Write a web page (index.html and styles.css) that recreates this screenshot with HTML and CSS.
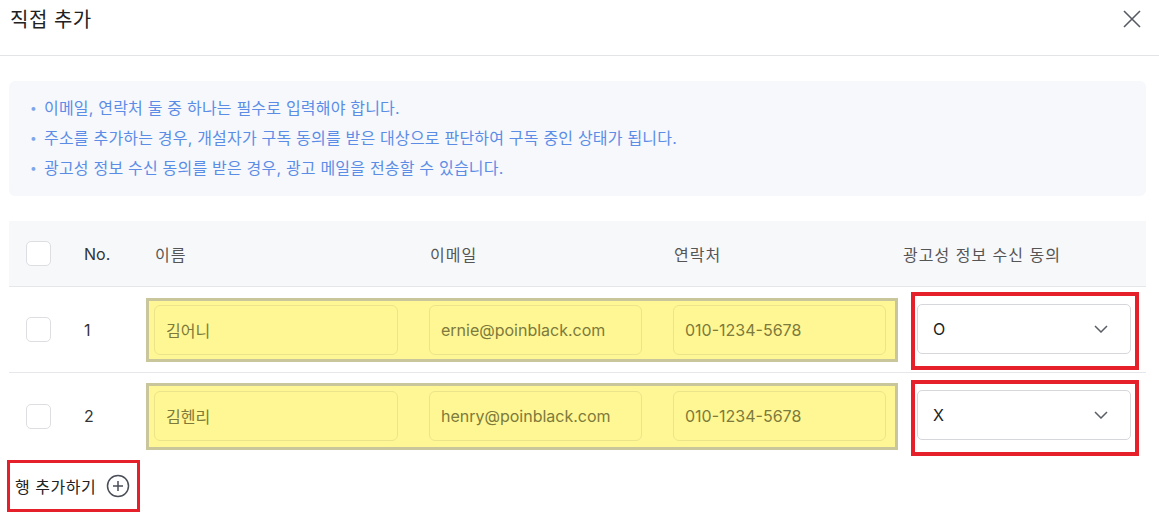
FILE: index.html
```html
<!DOCTYPE html>
<html lang="ko">
<head>
  <meta charset="UTF-8">
  <meta name="viewport" content="width=device-width, initial-scale=1.0">
  <title>직접 추가</title>
  <link rel="stylesheet" href="styles.css">
</head>
<body>

  <div class="modal">
    <header class="modal-head">
      <h2 class="modal-title">직접 추가</h2>
      <button type="button" class="close-btn" aria-label="닫기">
        <svg width="20" height="20" viewBox="0 0 20 20"><path d="M2 2L18 18M18 2L2 18" stroke="#555a63" stroke-width="1.6" fill="none"/></svg>
      </button>
    </header>

    <div class="modal-body">
      <ul class="notice">
        <li>이메일, 연락처 둘 중 하나는 필수로 입력해야 합니다.</li>
        <li>주소를 추가하는 경우, 개설자가 구독 동의를 받은 대상으로 판단하여 구독 중인 상태가 됩니다.</li>
        <li>광고성 정보 수신 동의를 받은 경우, 광고 메일을 전송할 수 있습니다.</li>
      </ul>

      <div class="add-table">
        <div class="row row-head">
          <div class="c-check"><span class="checkbox"></span></div>
          <div class="c-no">No.</div>
          <div class="fields fields-head">
            <span>이름</span>
            <span>이메일</span>
            <span>연락처</span>
          </div>
          <div class="c-consent consent-head">광고성 정보 수신 동의</div>
        </div>

        <div class="row">
          <div class="c-check"><span class="checkbox"></span></div>
          <div class="c-no">1</div>
          <div class="fields fields-hl">
            <input type="text" value="김어니">
            <input type="email" value="ernie@poinblack.com">
            <input type="text" value="010-1234-5678">
          </div>
          <div class="c-consent">
            <div class="mark mark-first">
              <div class="select">O
                <svg width="14" height="8" viewBox="0 0 14 8"><path d="M1 1L7 7L13 1" stroke="#5a5e66" stroke-width="1.5" fill="none"/></svg>
              </div>
            </div>
          </div>
        </div>

        <div class="row row-last">
          <div class="c-check"><span class="checkbox"></span></div>
          <div class="c-no">2</div>
          <div class="fields fields-hl fields-tall">
            <input type="text" value="김헨리">
            <input type="email" value="henry@poinblack.com">
            <input type="text" value="010-1234-5678">
          </div>
          <div class="c-consent">
            <div class="mark mark-second">
              <div class="select">X
                <svg width="14" height="8" viewBox="0 0 14 8"><path d="M1 1L7 7L13 1" stroke="#5a5e66" stroke-width="1.5" fill="none"/></svg>
              </div>
            </div>
          </div>
        </div>
      </div>

      <button type="button" class="add-row">
        행 추가하기
        <svg width="24" height="24" viewBox="0 0 24 24"><circle cx="12" cy="12" r="10.5" stroke="#4a4e57" stroke-width="1.5" fill="none"/><path d="M12 7V17M7 12H17" stroke="#4a4e57" stroke-width="1.5"/></svg>
      </button>
    </div>
  </div>

</body>
</html>
```

FILE: styles.css
```css
body {
  margin: 0;
  background-color: #fff;
  font-family: Inter, "Noto Sans CJK KR", sans-serif;
  color: #222;
}
.modal-head {
  display: flex;
  justify-content: space-between;
  align-items: center;
  height: 56px;
  padding: 0 17px 0 10px;
  border-bottom: 1px solid #e3e4e6;
  box-sizing: border-box;
}
.modal-title {
  margin: 0 0 18px;
  font-size: 20px;
  font-weight: 400;
  letter-spacing: 0.5px;
  color: #222;
}
.close-btn {
  border: none;
  background: none;
  padding: 0;
  margin-bottom: 18px;
  display: flex;
}
.modal-body {
  padding: 25px 13px 0 9px;
}
.notice {
  list-style: none;
  margin: 0;
  padding: 12px 21px 13px;
  background-color: #f6f8fc;
  border-radius: 6px;
  color: #5b8de6;
  font-size: 16px;
  letter-spacing: 0.2px;
  line-height: 30px;
}
.notice li {
  display: flex;
}
.notice li::before {
  content: "•";
  width: 14px;
  flex: none;
  font-size: 12px;
  color: #7ea6ea;
}
.add-table {
  margin-top: 25px;
}
.row {
  display: flex;
  align-items: center;
  height: 86px;
  padding-left: 17px;
  border-bottom: 1px solid #e6e7ea;
  box-sizing: border-box;
  font-size: 16px;
}
.row-head {
  height: 66px;
  background-color: #f7f8fa;
  color: #555;
}
.row-head .fields,
.row-head .c-consent {
  letter-spacing: 1px;
}
.row-last {
  border-bottom: none;
}
.c-check {
  width: 58px;
  flex: none;
  display: flex;
}
.checkbox {
  width: 25px;
  height: 25px;
  border: 1px solid #dcdee2;
  border-radius: 5px;
  background-color: #fff;
  box-sizing: border-box;
}
.c-no {
  width: 62px;
  flex: none;
  color: #333;
}
.fields {
  width: 752px;
  flex: none;
  display: grid;
  grid-template-columns: 244px 213px 213px;
  column-gap: 31px;
  padding: 4px 9px 4px 5px;
  border: 3px solid transparent;
  box-sizing: border-box;
}
.fields-head span {
  padding-left: 1px;
}
.fields-hl {
  background-color: #fff796;
  border-color: #c9c69c;
}
.fields-tall {
  padding-top: 5px;
  padding-bottom: 6px;
}
.fields input {
  height: 50px;
  padding: 0 11px;
  border: 1px solid #ece48a;
  border-radius: 6px;
  background-color: #fff793;
  color: #7d7a3c;
  font-family: Inter, "Noto Sans CJK KR", sans-serif;
  font-size: 16px;
  box-sizing: border-box;
  outline: none;
}
.c-consent {
  flex: 1;
}
.consent-head {
  padding-left: 5px;
}
.mark {
  width: 228px;
  margin-left: 13px;
  margin-top: 3px;
  border: 4px solid #e5202a;
  box-sizing: border-box;
}
.mark-first {
  padding: 8px 4px 12px 2px;
}
.mark-second {
  padding: 6px 4px 12px 2px;
}
.select {
  display: flex;
  justify-content: space-between;
  align-items: center;
  height: 50px;
  padding: 0 22px 0 15px;
  border: 1px solid #d5d7db;
  border-radius: 5px;
  background-color: #fff;
  box-sizing: border-box;
  font-size: 16px;
  color: #222;
}
.add-row {
  display: flex;
  align-items: center;
  gap: 10px;
  height: 52px;
  margin: 1px 0 0 -2px;
  padding: 0 7px 0 5px;
  border: 3px solid #e5202a;
  background: #fff;
  font-family: Inter, "Noto Sans CJK KR", sans-serif;
  font-size: 16px;
  letter-spacing: 0.5px;
  color: #222;
}
```
